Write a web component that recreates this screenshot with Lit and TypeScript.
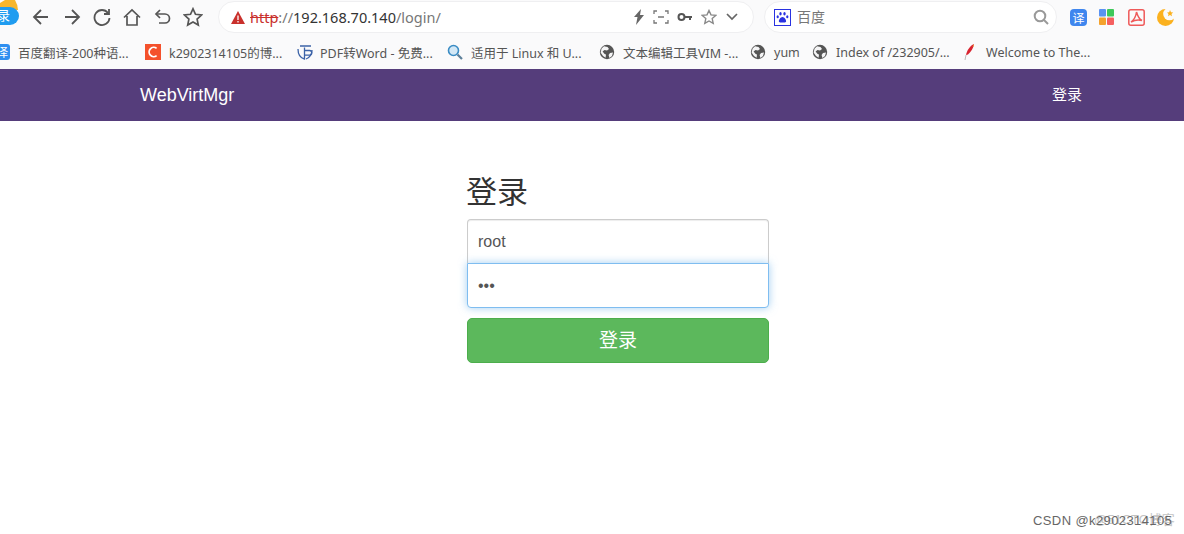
import { LitElement, html, css, svg } from "lit";
import { customElement } from "lit/decorators.js";

const globe = svg`<svg width="16" height="16" viewBox="0 0 16 16"><circle cx="8" cy="8" r="7.2" fill="#555"/><path d="M5 2.2 8.5 3 10 5 8 6.5 5.5 6 3.6 7.6 5.6 10 7 10.5 6.6 13.8 4 12 1.6 8.5 2.6 4.5ZM11 9l3-.6-1 3.6-2.6 2L9.6 11Z" fill="#f4f4f5"/></svg>`;

const bookmarks = [
  { w: 145, gap: 4, icon: svg`<svg width="14" height="16" viewBox="0 0 14 16"><rect x="-6" y="0" width="16" height="16" rx="3" fill="#2f8ff0"/><text x="-4" y="13" font-size="12" fill="#fff" font-family="Noto Sans CJK SC">译</text></svg>`, text: "百度翻译-200种语..." },
  { w: 152, gap: 8, icon: svg`<svg width="16" height="16" viewBox="0 0 16 16"><rect width="16" height="16" fill="#f4512c"/><path d="M11.6 4.4A4.6 4.6 0 1 0 11.6 11.6" fill="none" stroke="#fff" stroke-width="1.8"/></svg>`, text: "k2902314105的博..." },
  { w: 150, gap: 7, icon: svg`<svg width="16" height="16" viewBox="0 0 16 16" fill="none" stroke="#3c63a8" stroke-width="1.3"><path d="M1 5c0 5 2.500 9 6.500 10V3.500M15 6c0 4-2.500 8-6 9"/><path d="M3 2h11M8 6.500h4.500a2.300 2.300 0 0 1 0 4.600H8"/></svg>`, text: "PDF转Word - 免费..." },
  { w: 152, gap: 8, icon: svg`<svg width="16" height="16" viewBox="0 0 16 16" fill="none"><circle cx="6.500" cy="6.500" r="5" fill="#d3e8f6" stroke="#3a8cc4" stroke-width="1.6"/><path d="M10.500 10.500 15 15" stroke="#5c7f99" stroke-width="2.200"/></svg>`, text: "适用于 Linux 和 U..." },
  { w: 151, gap: 8, icon: globe, text: "文本编辑工具VIM -..." },
  { w: 62, gap: 8, icon: globe, text: "yum" },
  { w: 152, gap: 8, icon: globe, text: "Index of /232905/..." },
  { w: 160, gap: 11, icon: svg`<svg width="11" height="16" viewBox="0 0 11 16"><path d="M10 0C6 2 3 6 2 11l2-.6C7 8 9.500 4 10 0Z" fill="#d8232f"/><path d="M2 11 1 16" stroke="#bbb" fill="none"/><path d="M10 0 8.500 2.500 9.500 3Z" fill="#f0a030"/></svg>`, text: "Welcome to The..." },
];

@customElement("app-root")
export class AppRoot extends LitElement {
  static styles = css`
    :host { display: block; width: 1184px; height: 534px; overflow: hidden; position: relative; background: #fff; font-family: "Liberation Sans", "Noto Sans CJK SC", sans-serif; }
    .chrome { background: #fafafb; height: 69px; display: flex; flex-direction: column; }
    .toolbar { height: 34px; display: flex; align-items: center; position: relative; }
    .tab-badge { width: 26px; flex: none; height: 34px; overflow: hidden; position: relative; }
    .arc { position: absolute; left: 0; top: 0; display: block; }
    .pill { position: absolute; left: -10px; top: 7px; width: 29px; height: 18px; border-radius: 9px; background: #1f9cf0; color: #fff; font-size: 13px; line-height: 18px; display: flex; justify-content: flex-start; padding-left: 7px; box-sizing: border-box; }
    .nav-icons { display: flex; align-items: center; width: 192px; flex: none; }
    .nav-slot { width: 30.4px; display: flex; justify-content: center; flex: none; }
    .addr { width: 536px; height: 32px; box-sizing: border-box; flex: none; background: #fff; border: 1px solid #efeff1; border-radius: 16px; display: flex; align-items: center; padding: 0 14px 0 12px; }
    .warn { flex: none; margin-right: 5px; display: block; }
    .url { font-family: "Noto Sans", "Liberation Sans", sans-serif; font-size: 14.5px; color: #333; white-space: nowrap; flex: 1; padding-bottom: 1px; }
    .url s { color: #c9302c; text-decoration-thickness: 1px; }
    .url i { font-style: normal; color: #777; }
    .addr-icons { display: flex; align-items: center; gap: 8px; }
    .search { margin-left: 10px; width: 293px; height: 32px; box-sizing: border-box; flex: none; background: #fff; border: 1px solid #efeff1; border-radius: 16px; display: flex; align-items: center; padding: 0 7px 0 9px; font-size: 14px; color: #777; gap: 6px; }
    .search span { flex: 1; padding-bottom: 2px; }
    .ext { display: flex; align-items: center; margin-left: 13px; flex: none; }
    .ext svg { display: block; }
    .e2 { margin-left: 12px; }
    .e3 { margin-left: 14px; }
    .e4 { margin-left: 12px; }
    .bookmarks { height: 35px; display: flex; align-items: center; font-family: "Noto Sans", "Noto Sans CJK SC", sans-serif; font-size: 12.5px; color: #555; white-space: nowrap; }
    .bm { display: flex; align-items: center; flex: none; overflow: hidden; }
    .bm svg { flex: none; display: block; }
    .bm span { padding-top: 2px; }
    .topnav { height: 52px; background: #553d7b; display: flex; align-items: center; justify-content: space-between; padding: 0 102px 0 140px; color: #fff; }
    .brand { font-size: 18px; }
    .link { font-size: 15px; padding-bottom: 4px; }
    .form { width: 302px; display: flex; flex-direction: column; padding-top: 53px; margin-left: 467px; }
    h2 { margin: 0 0 7px; font-size: 31px; font-weight: 400; line-height: 38px; height: 38px; color: #333; margin-left: -1px; }
    .input { height: 44px; box-sizing: border-box; border: 1px solid #ccc; background: #fff; padding: 0 10px; font-size: 16px; color: #555; display: flex; align-items: center; }
    .top { border-radius: 4px 4px 0 0; border-bottom: 0; box-shadow: inset 0 1px 1px rgba(0,0,0,.075); }
    .pwd { height: 45px; border: 1px solid #7fbdf0; border-radius: 0 0 4px 4px; box-shadow: 0 0 8px rgba(102,175,233,.6); position: relative; }
    .btn { margin-top: 10px; height: 45px; box-sizing: border-box; background: #5cb85c; border: 1px solid #4cae4c; border-radius: 5px; color: #fff; font-size: 19px; display: flex; align-items: center; justify-content: center; padding-bottom: 5px; }
    .wm { position: absolute; left: 1033px; top: 512px; font-size: 13px; line-height: 18px; color: #666; white-space: nowrap; letter-spacing: .4px; }
    .ghost { position: absolute; left: 1094px; top: 511px; font-size: 13px; line-height: 18px; color: #b5b5b5; opacity: .8; white-space: nowrap; }
  `;

  render() {
    const ic = "#555";
    return html`
      <div class="chrome">
        <div class="toolbar">
          <div class="tab-badge"><svg class="arc" width="20" height="10" viewBox="0 0 20 10"><path d="M5 0H15Q17.500 4 18 10H0V3Z" fill="#f6b62d"/></svg><div class="pill">录</div></div>
          <div class="nav-icons">
            <div class="nav-slot"><svg width="18" height="18" viewBox="0 0 18 18" fill="none" stroke="${ic}" stroke-width="1.8"><path d="M16 9H2M9 2 2 9l7 7"/></svg></div>
            <div class="nav-slot"><svg width="18" height="18" viewBox="0 0 18 18" fill="none" stroke="${ic}" stroke-width="1.8"><path d="M2 9h14M9 2l7 7-7 7"/></svg></div>
            <div class="nav-slot"><svg width="18" height="18" viewBox="0 0 18 18" fill="none" stroke="${ic}" stroke-width="1.8"><path d="M15 5A7.500 7.500 0 1 0 16.500 10"/><path d="M16 1v5h-5"/></svg></div>
            <div class="nav-slot"><svg width="18" height="18" viewBox="0 0 18 18" fill="none" stroke="${ic}" stroke-width="1.7"><path d="M1 9.500 9 2l8 7.500M4 8v9h10V8"/></svg></div>
            <div class="nav-slot"><svg width="18" height="18" viewBox="0 0 18 18" fill="none" stroke="${ic}" stroke-width="1.7"><path d="M6 2 2 6l4 4"/><path d="M2 6h9a4.500 4.500 0 0 1 0 9H5"/></svg></div>
            <div class="nav-slot"><svg width="20" height="20" viewBox="0 0 20 20" fill="none" stroke="${ic}" stroke-width="1.7"><path d="m10 1.800 2.500 5.500 6 .7-4.400 4.100 1.200 5.900-5.300-3-5.300 3 1.200-5.900L1.500 8l6-.7Z"/></svg></div>
          </div>
          <div class="addr">
            <svg class="warn" width="14" height="13" viewBox="0 0 14 13"><path d="M7 0 14 13H0Z" fill="#c9302c"/><path d="M7 4.500v4.500M7 10v1.500" stroke="#fff" stroke-width="1.300"/></svg>
            <div class="url"><s>http</s><i>://</i>192.168.70.140<i>/login/</i></div>
            <div class="addr-icons">
              <svg width="12" height="16" viewBox="0 0 12 16"><path d="M8 0 1 8h3.500L3 16l8-10H7Z" fill="#666"/></svg>
              <svg width="16" height="14" viewBox="0 0 16 14" fill="none" stroke="#777" stroke-width="1.300"><path d="M1 4V1h3M12 1h3v3M15 10v3h-3M4 13H1v-3M5 7h6"/></svg>
              <svg width="16" height="10" viewBox="0 0 16 10" fill="none" stroke="#555" stroke-width="2"><circle cx="4.500" cy="5" r="3"/><path d="M8 5h7M13 5v3"/></svg>
              <svg width="16" height="16" viewBox="0 0 16 16" fill="none" stroke="#888" stroke-width="1.400"><path d="m8 1.500 2 4.400 4.800.5-3.600 3.200 1 4.800L8 12l-4.200 2.400 1-4.800L1.200 6.400 6 5.900Z"/></svg>
              <svg width="14" height="16" viewBox="0 0 14 16" fill="none" stroke="#666" stroke-width="1.700"><path d="m2 5 5 5 5-5"/></svg>
            </div>
          </div>
          <div class="search">
            <svg width="17" height="17" viewBox="0 0 17 17"><rect x=".5" y=".5" width="16" height="16" fill="#fff" stroke="#2932e1"/><path d="M8.500 8c-2 0-4 3-3.600 4.600.4 1.400 2.400.9 3.600.9s3.200.5 3.600-.9C12.500 11 10.500 8 8.500 8Z" fill="#2932e1"/><ellipse cx="6.500" cy="4.800" rx="1.200" ry="1.700" fill="#2932e1"/><ellipse cx="10.500" cy="4.800" rx="1.200" ry="1.700" fill="#2932e1"/><ellipse cx="3.700" cy="7.800" rx="1.100" ry="1.500" fill="#2932e1"/><ellipse cx="13.300" cy="7.800" rx="1.100" ry="1.500" fill="#2932e1"/></svg>
            <span>百度</span>
            <svg width="16" height="16" viewBox="0 0 16 16" fill="none" stroke="#999" stroke-width="2"><circle cx="7" cy="7" r="5.300"/><path d="m11 11 4 4"/></svg>
          </div>
          <div class="ext">
            <svg width="17" height="17" viewBox="0 0 17 17"><rect width="17" height="17" rx="4" fill="#3f86ee"/><text x="2.500" y="13.500" font-size="12" fill="#fff" font-family="Noto Sans CJK SC">译</text></svg>
            <svg class="e2" width="15" height="16" viewBox="0 0 15 16"><rect width="7" height="7.500" rx="1" fill="#5a93f2"/><rect x="8" width="7" height="7.500" rx="1" fill="#3ec85a"/><rect y="8.500" width="7" height="7.500" rx="1" fill="#f4a22d"/><rect x="8" y="8.500" width="7" height="7.500" rx="1" fill="#f56060"/></svg>
            <svg class="e3" width="17" height="17" viewBox="0 0 17 17" fill="none" stroke="#ef5a5a" stroke-width="1.500"><rect x=".8" y=".8" width="15.400" height="15.400" rx="2"/><path d="M8.500 3c-.5 4-2 7.500-5.500 10 3.500-2 7.500-2.500 11-1.500C11 10 9.500 6.500 8.500 3Z"/></svg>
            <svg class="e4" width="18" height="18" viewBox="0 0 18 18"><circle cx="8.500" cy="9.500" r="8.500" fill="#fbb11f"/><circle cx="12.500" cy="6" r="6.300" fill="#fafafb"/><path d="m13 2 1 2.200 2.200.2-1.700 1.500.5 2.300-2-1.200-2 1.200.5-2.300L10 4.400l2.200-.2Z" fill="#fbb11f"/></svg>
          </div>
        </div>
        <div class="bookmarks">
          ${bookmarks.map(
            (b) => html`<div class="bm" style="width:${b.w}px;gap:${b.gap}px">${b.icon}<span>${b.text}</span></div>`
          )}
        </div>
      </div>
      <div class="topnav"><span class="brand">WebVirtMgr</span><span class="link">登录</span></div>
      <div class="form">
        <h2>登录</h2>
        <div class="input top">root</div>
        <div class="input pwd">•••</div>
        <div class="btn">登录</div>
      </div>
      <div class="ghost">@51CTO博客</div>
      <div class="wm">CSDN @k2902314105</div>
    `;
  }
}
